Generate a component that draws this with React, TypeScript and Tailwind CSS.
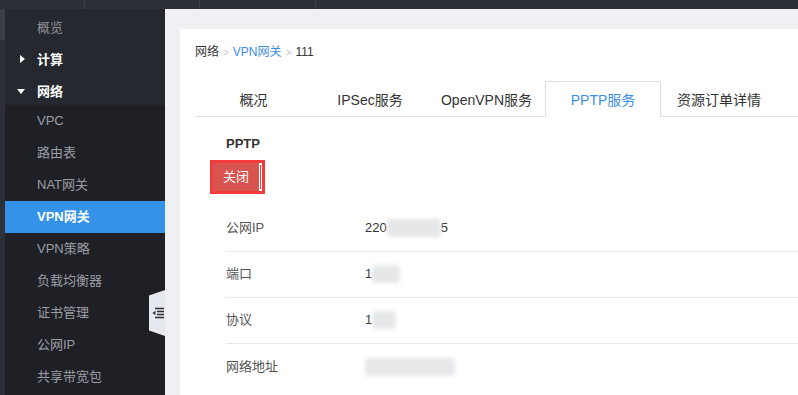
import React from "react";

const FONT = { fontFamily: '"Liberation Sans", Arial, "Noto Sans CJK SC", sans-serif' };

type MenuItem = { label: string; level: 0 | 1; arrow?: "right" | "down"; active?: boolean };

const MENU: MenuItem[] = [
  { label: "概览", level: 1 },
  { label: "计算", level: 0, arrow: "right" },
  { label: "网络", level: 0, arrow: "down" },
  { label: "VPC", level: 1 },
  { label: "路由表", level: 1 },
  { label: "NAT网关", level: 1 },
  { label: "VPN网关", level: 1, active: true },
  { label: "VPN策略", level: 1 },
  { label: "负载均衡器", level: 1 },
  { label: "证书管理", level: 1 },
  { label: "公网IP", level: 1 },
  { label: "共享带宽包", level: 1 },
];

const TABS = ["概况", "IPSec服务", "OpenVPN服务", "PPTP服务", "资源订单详情"];
const TAB_W = ["w-[117px]", "w-[116px]", "w-[117px]", "w-[116px]", "w-[116px]"];

function Blur({ w }: { w: number }) {
  return <span className="inline-block h-[18px] rounded-[4px] bg-[#e6e7e9] align-middle blur-[2px]" style={{ width: w }} />;
}

function Row({ label, children, last }: { label: string; children: React.ReactNode; last?: boolean }) {
  return (
    <div className={`flex h-[46px] items-center text-[13px] ${last ? "" : "border-b border-[#e4e8f0]"}`}>
      <div className="w-[139px] text-[#555]">{label}</div>
      <div className="flex items-center text-[#333]">{children}</div>
    </div>
  );
}

export default function App() {
  return (
    <div className="flex h-[395px] w-[798px] flex-col overflow-hidden bg-[#eff0f4]" style={FONT}>
      {/* top bar */}
      <div className="flex h-[9px] shrink-0 bg-[#2d2f37]">
        <div className="w-[85px] border-r border-[#3c3f48]" />
        <div className="w-[115px] border-r border-[#3c3f48]" />
        <div className="w-[116px] border-r border-[#3c3f48]" />
      </div>
      <div className="flex min-h-0 flex-1">
        {/* sidebar */}
        <div className="relative flex w-[165px] shrink-0">
          <div className="flex w-[5px] flex-col bg-[#2e3039]">
            <div className="h-[31px] bg-[#3b3e45]" />
          </div>
          <div className="flex flex-1 flex-col bg-[#1f2026]">
            {MENU.map((m, i) => (
              <div
                key={m.label}
                className={`relative flex h-[32px] shrink-0 items-center pl-[32px] text-[13px] ${i < 3 ? "pt-[6px]" : ""} ${
                  m.active
                    ? "bg-[#3492e9] font-bold text-white"
                    : m.level === 0
                    ? "bg-[#25282e] font-bold text-white"
                    : i === 0
                    ? "bg-[#25282e] text-[#8e9196]"
                    : "text-[#9a9da3]"
                }`}
              >
                {m.arrow === "right" && (
                  <span className="absolute left-[15px] top-[14px] h-0 w-0 border-y-[4px] border-l-[5px] border-y-transparent border-l-white" />
                )}
                {m.arrow === "down" && (
                  <span className="absolute left-[12px] top-[16px] h-0 w-0 border-x-[4px] border-t-[5px] border-x-transparent border-t-white" />
                )}
                {m.label}
              </div>
            ))}
          </div>
          {/* collapse toggle */}
          <div className="absolute left-[149px] top-[281px] flex h-[46px] w-[16px] items-center justify-center bg-[#e6e8ef] [clip-path:polygon(100%_0,100%_100%,0_88%,0_12%)]">
            <svg width="12" height="12" viewBox="0 0 12 12" className="ml-[1px]">
              <path d="M3 1.5h9M5 4.5h7M5 7.5h7M3 10.5h9" stroke="#2b2d33" strokeWidth="1.6" />
              <path d="M0.5 6L3.5 3.8V8.2Z" fill="#2b2d33" />
            </svg>
          </div>
        </div>
        {/* main */}
        <div className="min-w-0 flex-1 pl-[15px] pt-[20px]">
          <div className="h-full bg-white pl-[15px] pt-[14px]">
            <div className="flex items-center gap-[4px] text-[12px] text-[#333]">
              <span>网络</span>
              <span className="text-[10px] text-[#c8c8c8]">&gt;</span>
              <span className="text-[#3a8ee6]">VPN网关</span>
              <span className="text-[10px] text-[#c8c8c8]">&gt;</span>
              <span>111</span>
            </div>
            <div className="mt-[20px] flex h-[36px] border-b border-[#dcdfe6] text-[14px]">
              {TABS.map((t, i) =>
                i === 3 ? (
                  <div
                    key={t}
                    className={`-mb-px flex items-center justify-center border border-b-white border-[#dcdfe6] bg-white pt-[3px] text-[#3a8ee6] ${TAB_W[i]}`}
                  >
                    {t}
                  </div>
                ) : (
                  <div key={t} className={`flex items-center justify-center pt-[3px] text-[#333] ${TAB_W[i]}`}>
                    {t}
                  </div>
                )
              )}
            </div>
            <div className="pl-[31px]">
              <div className="mt-[17px] text-[13px] font-bold text-[#333]">PPTP</div>
              <div className="ml-[-16px] mt-[6px] flex h-[34px] w-[55px] items-center border-[3px] border-[#f53a3a]">
                <div className="flex h-[28px] w-[46px] items-center justify-center bg-[#d9534f] text-[13px] text-white">
                  关闭
                </div>
                <div className="ml-[1px] h-[26px] w-[2px] border-y border-r border-white bg-[#d9534f]" />
              </div>
              <div className="mt-[12px]">
                <Row label="公网IP">
                  <span>220</span>
                  <Blur w={54} />
                  <span>5</span>
                </Row>
                <Row label="端口">
                  <span>1</span>
                  <Blur w={28} />
                </Row>
                <Row label="协议">
                  <span>1</span>
                  <Blur w={24} />
                </Row>
                <Row label="网络地址" last>
                  <Blur w={90} />
                </Row>
              </div>
            </div>
          </div>
        </div>
      </div>
    </div>
  );
}
